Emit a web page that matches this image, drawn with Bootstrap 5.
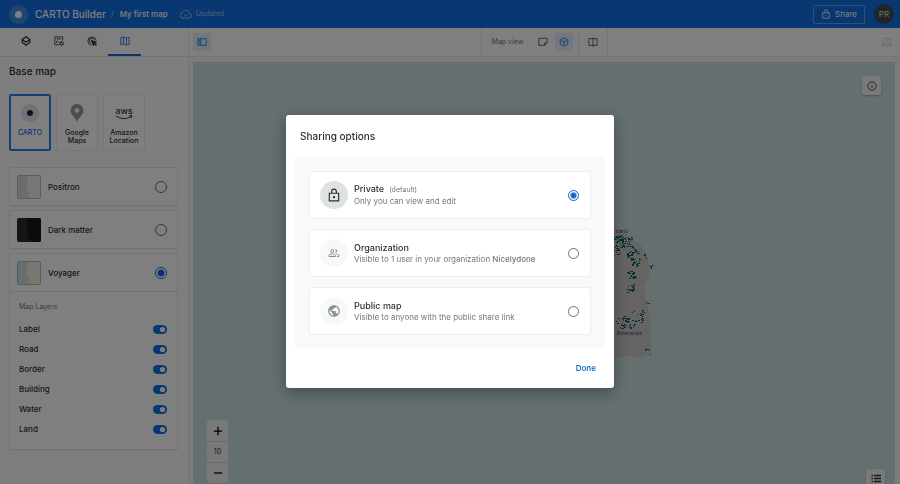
<!DOCTYPE html>
<html lang="en">
<head>
<meta charset="utf-8">
<meta name="viewport" content="width=device-width, initial-scale=1">
<title>CARTO Builder</title>
<link href="https://cdn.jsdelivr.net/npm/bootstrap@5.3.0/dist/css/bootstrap.min.css" rel="stylesheet">
<style>
:root { --blue: #0f6fe0; --ink: #2c3032; --soft: #747879; --line: #e6e6e6; }
body { font-family: Inter, "Liberation Sans", sans-serif; font-size: 8px; line-height: 12px; color: var(--ink); background: #fff; }
svg { display: block; fill: none; stroke: currentColor; stroke-width: 2; flex: none; }
svg.flat { stroke: none; }
svg.flat [stroke] { stroke-width: 1; }
svg.bold { stroke-width: 3; }
.i10 { width: 10px; height: 10px; }
.i12 { width: 12px; height: 12px; }
.i14 { width: 14px; height: 14px; }
button, .mid { font-weight: 500; }
.tiny { font-size: 7px; }
.topbar { height: 28px; background: #106fe2; color: #fff; padding: 0 6px 0 9px; }
.logo-disc { width: 19px; height: 19px; background: rgba(255,255,255,.2); }
.logo-disc::after { content: ""; width: 7px; height: 7px; border-radius: 50%; background: #fff; }
.brand-name { font-size: 10px; margin-left: 7px; }
.faint { opacity: .55; }
.saved { gap: 4px; margin-left: 12px; }
.slash { margin: 0 6px 0 5px; }
.share-btn { height: 19px; width: 52px; font-size: 8px; line-height: 12px; color: #fff; border: 1px solid rgba(255,255,255,.35); border-radius: 2px; gap: 4px; }
.share-btn:hover { color: #fff; }
.avatar { width: 20px; height: 20px; background: #404a55; color: #ddd; margin-left: 9px; }
.sidebar { width: 189px; border-right: 1px solid var(--line); background: #fdfdfd; }
.tabs { height: 29px; border-bottom: 1px solid var(--line); padding-left: 9px; background: #fff; }
.tab-btn { width: 33px; height: 28px; border: 0; border-bottom: 2px solid transparent; background: none; color: var(--ink); }
.tab-btn.active { color: var(--blue); border-color: var(--blue); }
.side-body { padding: 7px 10px 16px 9px; }
.side-title { font-size: 10px; line-height: 14px; font-weight: 500; margin: 0 0 16px; }
.providers { gap: 5px; margin-bottom: 16px; }
.provider { width: 42px; height: 57px; border: 1px solid #ededed; border-radius: 2px; background: #fff; font-size: 7px; line-height: 8px; padding: 8px 0 0; color: var(--ink); gap: 6px; }
.provider.active { border: 2px solid #2f7fe6; color: var(--blue); padding-top: 7px; }
.provider svg { width: 20px; height: 20px; }
.style-box { border: 1px solid var(--line); border-radius: 2px; background: #fff; box-shadow: 0 1px 1px rgba(0,0,0,.06); }
.style-row { height: 37px; padding: 0 10px 0 7px; font-weight: 500; gap: 7px; }
.thumb { width: 24px; height: 24px; border-radius: 2px; overflow: hidden; }
.form-check-input.pick { width: 12px; height: 12px; margin: 0; border: 1px solid #6c7072; background: #fff; flex: none; box-shadow: none; }
.form-check-input.pick:checked { border-color: var(--blue); background: radial-gradient(circle, var(--blue) 3px, #fff 4px); }
.option .form-check-input.pick { width: 11px; height: 11px; }
.option .form-check-input.pick:checked { background: radial-gradient(circle, #0f66c4 2px, #fff 4px); border-color: #0f66c4; }
.layers { border-top: 1px solid var(--line); padding: 9px 10px 10px 9px; }
.layers-title { margin-bottom: 6px; }
.layer-row { height: 20px; font-weight: 500; }
.form-check-input.toggle { width: 14px; height: 9px; margin: 0; border: 0; box-shadow: none; }
.form-switch .form-check-input.toggle:checked { background-color: var(--blue); background-size: 7px 7px; background-position: right 1px center; }
.toolbar { height: 29px; border-bottom: 1px solid var(--line); background: #fff; }
.tool-btn { width: 18px; height: 18px; border: 0; border-radius: 2px; background: none; color: #4c5052; padding: 0; }
.tool-btn.on { background: #e4effc; color: var(--blue); }
.tool-group { height: 28px; border-left: 1px solid var(--line); padding: 0 5px 0 10px; gap: 3px; }
.tool-group .tiny { margin-right: 8px; }
.tool-group.last { border-right: 1px solid var(--line); padding: 0 5px; }
.map-wrap { padding: 5px 5px 0 4px; background: #f6f6f6; }
.map-area { background: #cadfe1; }
.map-chip { position: absolute; background: #f2f2f2; border: 0; border-radius: 2px; color: #2c3032; width: 19px; height: 19px; padding: 0; box-shadow: 0 1px 2px rgba(0,0,0,.25); }
.chip-info { top: 14px; right: 14px; }
.chip-legend { bottom: -4px; right: 10px; }
.zoomer { position: absolute; left: 14px; bottom: 1px; width: 21px; background: #f2f2f2; border-radius: 2px; }
.zoomer > * { height: 21px; border: 0; background: none; padding: 0; }
.zoomer > * + * { border-top: 1px solid #d4d4d4; }
.island { position: absolute; left: 50%; top: 163px; width: 110px; height: 140px; }
.shade { background: rgba(0,0,0,.5); z-index: 1040; }
.share-modal { max-width: 328px; margin: 0 auto; padding-top: 115px; }
.share-modal .modal-content { border: 0; border-radius: 3px; color: var(--ink); box-shadow: 0 4px 16px rgba(0,0,0,.35); }
.share-modal h2 { font-size: 10px; line-height: 14px; font-weight: 500; margin: 0; padding: 14px; }
.options { margin: 0 9px; padding: 14px; background: #f8f9f9; gap: 10px; }
.option { height: 48px; border: 1px solid #ebeeee; border-radius: 3px; background: #fff; padding: 0 11px 0 10px; gap: 6px; }
.disc { width: 28px; height: 28px; background: #f7f9f9; color: #8b8f90; flex: none; }
.disc.current { background: #dfe2e3; color: var(--ink); }
.option-name { font-size: 9px; font-weight: 500; line-height: 11px; gap: 5px; }
.option-name .tiny { font-weight: 400; }
.hint { color: var(--soft); }
.done-btn { font-size: 8px; line-height: 12px; font-weight: 600; color: #1670c8; border: 0; background: none; padding: 0; }
.done-bar { padding: 13px 18px 14px; }
</style>
<script src="https://cdn.jsdelivr.net/npm/bootstrap@5.3.0/dist/js/bootstrap.bundle.min.js"></script>
</head>
<body>
<div class="d-flex flex-column vh-100 overflow-hidden">
  <header class="topbar d-flex align-items-center flex-shrink-0">
    <span class="logo-disc rounded-circle d-flex align-items-center justify-content-center"></span>
    <span class="brand-name mid">CARTO Builder</span>
    <span class="faint slash">/</span>
    <span class="mid">My first map</span>
    <span class="faint tiny saved d-flex align-items-center">
      <svg class="i12" viewBox="0 0 24 24"><path d="M19 10.500A7 7 0 0 0 5.500 9 5.500 5.500 0 0 0 6 20h13a4.800 4.800 0 0 0 0-9.500zM8.500 14l2.500 2.500 4.500-5"/></svg>
      Updated</span>
    <button class="share-btn btn p-0 ms-auto d-flex align-items-center justify-content-center">
      <svg class="i10" viewBox="0 0 24 24"><path d="M4 9h16v13H4zM8 9V6a4 4 0 0 1 8 0v3M12 14v3"/></svg>Share</button>
    <span class="avatar rounded-circle d-flex align-items-center justify-content-center">PR</span>
  </header>

  <div class="d-flex flex-grow-1 overflow-hidden">
    <aside class="sidebar flex-shrink-0">
      <nav class="tabs d-flex" aria-label="Panels">
        <button class="tab-btn d-flex align-items-center justify-content-center" aria-label="Layers"><svg class="i10 bold" viewBox="0 0 24 24"><path d="M12 2l9 6.500-9 6.500-9-6.500zM3 8.500v7L12 22l9-6.500v-7"/></svg></button>
        <button class="tab-btn d-flex align-items-center justify-content-center" aria-label="Widgets"><svg class="i10" viewBox="0 0 24 24"><path d="M11 21H2V2h19v9M6.500 17v-6M11 15v-2M6 7h11"/><circle cx="18" cy="18" r="3.500"/><path d="M18 12v3M18 21v3M12.500 15l3 1.500M23.500 15l-3 1.500M12.500 21l3-1.500M23.500 21l-3-1.500"/></svg></button>
        <button class="tab-btn d-flex align-items-center justify-content-center" aria-label="Interactions"><svg class="i10" viewBox="0 0 24 24"><path d="M22 11A10 10 0 1 0 11 22M17 10A6 6 0 1 0 9.500 17"/><path d="M10 10l13 5-4.500 2 4.500 4.500-1.500 1.500-4.500-4.500-2 4.500z" fill="currentColor"/></svg></button>
        <button class="tab-btn active d-flex align-items-center justify-content-center" aria-label="Base map"><svg class="i10" viewBox="0 0 24 24"><path d="M2 4l6.500-1.500 7 2.500L22 3v17l-6.500 1.500-7-2.500L2 21zM8.500 3v16M15.500 5v16"/></svg></button>
      </nav>
      <div class="side-body">
        <h1 class="side-title">Base map</h1>
        <div class="providers d-flex">
          <button class="provider active d-flex flex-column align-items-center">
            <svg class="flat" viewBox="0 0 20 20"><circle cx="10" cy="10" r="9" fill="#e2e2f0"/><circle cx="10" cy="10" r="3" fill="#162945"/></svg>CARTO</button>
          <button class="provider d-flex flex-column align-items-center">
            <svg class="flat" viewBox="0 0 20 20"><path fill="#9b9b9b" fill-rule="evenodd" d="M10 1a6.500 6.500 0 0 0-6.500 6.500C3.500 12 8 13.500 10 19c2-5.500 6.500-7 6.500-11.500A6.500 6.500 0 0 0 10 1zm0 4.200a2.300 2.300 0 1 1 0 4.600 2.300 2.300 0 0 1 0-4.600z"/></svg><span>Google<br>Maps</span></button>
          <button class="provider d-flex flex-column align-items-center">
            <svg class="flat" viewBox="0 0 20 20"><text x="10" y="11" text-anchor="middle" font-size="9" font-weight="500" fill="#333">aws</text><path stroke="#444" d="M2 13q8 5 15 .5M15 13l3-.5-.8 2.500"/></svg><span>Amazon<br>Location</span></button>
        </div>
        <div class="d-flex flex-column gap-1">
          <div class="style-box"><label class="style-row d-flex align-items-center">
            <svg class="thumb flat" viewBox="0 0 24 24"><path fill="#d2dadb" d="M0 0h24v24H0z"/><path fill="#f0efeb" d="M11 0h13v24h-9l-4-3 1-4-3-4 2-4-1-4z"/><rect x=".5" y=".5" width="23" height="23" rx="1" stroke="#b6bcbc"/></svg>
            <span class="flex-grow-1">Positron</span><input class="form-check-input pick" type="radio" name="basemap"></label></div>
          <div class="style-box"><label class="style-row d-flex align-items-center">
            <svg class="thumb flat" viewBox="0 0 24 24"><path fill="#2b2b2b" d="M0 0h24v24H0z"/><path fill="#161616" d="M11 0h13v24h-9l-4-3 1-4-3-4 2-4-1-4z"/></svg>
            <span class="flex-grow-1">Dark matter</span><input class="form-check-input pick" type="radio" name="basemap"></label></div>
          <div class="style-box"><label class="style-row d-flex align-items-center">
            <svg class="thumb flat" viewBox="0 0 24 24"><path fill="#cadfe5" d="M0 0h24v24H0z"/><path fill="#f4ecdf" d="M11 0h13v24h-9l-4-3 1-4-3-4 2-4-1-4z"/><rect x=".5" y=".5" width="23" height="23" rx="1" stroke="#a5bac0"/></svg>
            <span class="flex-grow-1">Voyager</span><input class="form-check-input pick" type="radio" name="basemap" checked></label>
            <div class="layers">
              <div class="hint tiny layers-title">Map Layers</div>
              <label class="layer-row form-switch p-0 d-flex align-items-center justify-content-between">Label<input class="form-check-input toggle" type="checkbox" role="switch" checked></label>
              <label class="layer-row form-switch p-0 d-flex align-items-center justify-content-between">Road<input class="form-check-input toggle" type="checkbox" role="switch" checked></label>
              <label class="layer-row form-switch p-0 d-flex align-items-center justify-content-between">Border<input class="form-check-input toggle" type="checkbox" role="switch" checked></label>
              <label class="layer-row form-switch p-0 d-flex align-items-center justify-content-between">Building<input class="form-check-input toggle" type="checkbox" role="switch" checked></label>
              <label class="layer-row form-switch p-0 d-flex align-items-center justify-content-between">Water<input class="form-check-input toggle" type="checkbox" role="switch" checked></label>
              <label class="layer-row form-switch p-0 d-flex align-items-center justify-content-between">Land<input class="form-check-input toggle" type="checkbox" role="switch" checked></label>
            </div></div>
        </div>
      </div>
    </aside>

    <main class="flex-grow-1 d-flex flex-column">
      <div class="toolbar d-flex align-items-center flex-shrink-0">
        <div class="col ps-1"><button class="tool-btn on d-flex align-items-center justify-content-center" aria-label="Toggle panel"><svg class="i10" viewBox="0 0 24 24"><path d="M2 4h20v16H2zM9 4v16M4 8h3M4 12h3M4 16h3"/></svg></button></div>
        <div class="tool-group d-flex align-items-center"><span class="hint tiny">Map view</span>
          <button class="tool-btn d-flex align-items-center justify-content-center" aria-label="Flat view"><svg class="i10" viewBox="0 0 24 24"><path d="M2 3h20v11l-6 6H2zM22 14h-6v6"/></svg></button>
          <button class="tool-btn on d-flex align-items-center justify-content-center" aria-label="3D view"><svg class="i10" viewBox="0 0 24 24"><path d="M12 2l9 5v10l-9 5-9-5V7zM6 8.500l6 3.500 6-3.500M12 12v7"/></svg></button></div>
        <div class="tool-group last d-flex align-items-center"><button class="tool-btn d-flex align-items-center justify-content-center" aria-label="Split view"><svg class="i10" viewBox="0 0 24 24"><path d="M2 4h20v16H2zM12 1v22"/></svg></button></div>
        <div class="col d-flex justify-content-end pe-1"><button class="tool-btn d-flex align-items-center justify-content-center opacity-25" aria-label="Image"><svg class="i10" viewBox="0 0 24 24"><path d="M2 3h20v18H2zM3 20l7-7 4 4 3-3 5 5"/><circle cx="15" cy="8" r="2"/></svg></button></div>
      </div>
      <div class="map-wrap flex-grow-1 d-flex">
        <div class="map-area flex-grow-1 position-relative">
          <svg class="island flat" viewBox="0 0 110 140" aria-label="Island">
            <path fill="#cdc9c5" d="M20 20L60 2l17 2 8 8 12 8 6 12 4 10-2 10-5 8 1 10 3 10 2 12 1 20 1 12-3 6-8 3-14-2-22 4-30-10z"/>
            <g id="spots" fill="#0d6370"></g>
            <text x="84" y="8" font-size="5" text-anchor="end" fill="#3c4460">cario</text>
            <text x="98" y="110" font-size="5" text-anchor="end" fill="#3c4460">Botanarios</text>
          </svg>
          <button class="map-chip chip-info d-flex align-items-center justify-content-center" aria-label="Information"><svg class="i10" viewBox="0 0 24 24"><circle cx="12" cy="12" r="10"/><path d="M12 11v6M12 7v2"/></svg></button>
          <div class="zoomer d-flex flex-column">
            <button class="d-flex align-items-center justify-content-center" aria-label="Zoom in"><svg class="i10 bold" viewBox="0 0 24 24"><path d="M12 2v20M2 12h20"/></svg></button>
            <div class="d-flex align-items-center justify-content-center tiny">10</div>
            <button class="d-flex align-items-center justify-content-center" aria-label="Zoom out"><svg class="i10 bold" viewBox="0 0 24 24"><path d="M2 12h20"/></svg></button>
          </div>
          <button class="map-chip chip-legend d-flex align-items-center justify-content-center" aria-label="Legend"><svg class="i10 bold" viewBox="0 0 20 20"><path d="M6 3h14M6 9h14M6 15h14M1 3h3M1 9h3M1 15h3"/></svg></button>
        </div>
      </div>
    </main>
  </div>
</div>

<div class="shade position-fixed top-0 start-0 w-100 h-100"></div>
<div class="modal show d-block" role="dialog" aria-labelledby="dlg">
  <div class="modal-dialog share-modal">
    <div class="modal-content">
      <h2 id="dlg">Sharing options</h2>
      <div class="options d-flex flex-column">
        <label class="option d-flex align-items-center">
          <span class="disc current rounded-circle d-flex align-items-center justify-content-center"><svg class="i14" viewBox="0 0 24 24"><path d="M4 9h16v13H4zM8 9V6a4 4 0 0 1 8 0v3"/><circle cx="12" cy="15.500" r="1"/></svg></span>
          <span class="flex-grow-1"><span class="option-name d-flex align-items-baseline">Private <span class="hint tiny">(default)</span></span><span class="hint">Only you can view and edit</span></span>
          <input class="form-check-input pick" type="radio" name="share" checked></label>
        <label class="option d-flex align-items-center">
          <span class="disc rounded-circle d-flex align-items-center justify-content-center"><svg class="i12" viewBox="0 0 24 24"><circle cx="8.500" cy="8" r="3"/><path d="M2 19v-2c0-4 13-4 13 0v2zM14.500 5a3 3 0 0 1 0 6M17 14c3 .5 5 1.500 5 3v2h-4"/></svg></span>
          <span class="flex-grow-1"><span class="option-name d-flex">Organization</span><span class="hint">Visible to 1 user in your organization <b class="mid">Nicelydone</b></span></span>
          <input class="form-check-input pick" type="radio" name="share"></label>
        <label class="option d-flex align-items-center">
          <span class="disc rounded-circle d-flex align-items-center justify-content-center"><svg class="i14 flat" viewBox="0 0 24 24"><path fill="currentColor" d="M12 2C6.480 2 2 6.480 2 12s4.480 10 10 10 10-4.480 10-10S17.520 2 12 2zm-1 17.930c-3.950-.49-7-3.850-7-7.930 0-.62.080-1.210.21-1.790L9 15v1c0 1.100.9 2 2 2v1.930zm6.900-2.540c-.26-.81-1-1.390-1.900-1.390h-1v-3c0-.55-.45-1-1-1H8v-2h2c.55 0 1-.45 1-1V7h2c1.100 0 2-.9 2-2v-.41c2.930 1.190 5 4.060 5 7.410 0 2.080-.8 3.970-2.100 5.390z"/></svg></span>
          <span class="flex-grow-1"><span class="option-name d-flex">Public map</span><span class="hint">Visible to anyone with the public share link</span></span>
          <input class="form-check-input pick" type="radio" name="share"></label>
      </div>
      <div class="done-bar d-flex justify-content-end"><button class="done-btn">Done</button></div>
    </div>
  </div>
</div>
<script>
// Scatter of data cells: [x, y, spread, count] clusters inside the island.
const clusters = [[74,14,5,38],[83,17,5,36],[85,30,4,24],[91,37,4,28],[90,24,4,16],[87,50,4,24],[86,63,4,22],[72,24,5,24],[94,91,6,24],[84,98,7,30],[76,98,5,20],[100,32,3,4],[106,41,2,4],[104,78,2,3],[104,126,4,5]];
let seed = 7;
const rnd = () => (seed = seed * 16807 % 2147483647) / 2147483647;
let cells = "";
for (const [x, y, s, n] of clusters)
  for (let i = 0; i < n; i++)
    cells += `<rect x="${Math.round(x + (rnd() - .5) * 2 * s)}" y="${Math.round(y + (rnd() - .5) * 2 * s)}" width="${1 + i % 2}" height="1"/>`;
document.getElementById("spots").innerHTML = cells;
</script>
</body>
</html>
